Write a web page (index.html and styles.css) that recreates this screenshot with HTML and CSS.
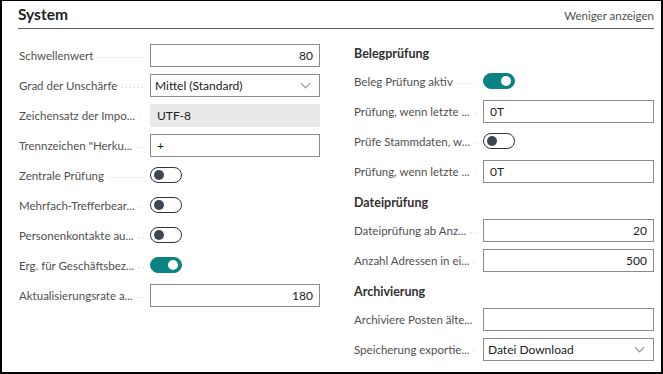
FILE: index.html
```html
<!DOCTYPE html>
<html lang="de">
<head>
  <meta charset="UTF-8">
  <title>System</title>
  <link rel="stylesheet" href="styles.css">
</head>
<body>
  <div class="card">
    <div class="card-head">
      <h2>System</h2>
      <span class="more">Weniger anzeigen</span>
    </div>

    <div class="columns">
      <div class="col">
        <div class="row">
          <label><span>Schwellenwert</span></label>
          <input class="num" type="text" value="80">
        </div>
        <div class="row">
          <label><span>Grad der Unschärfe</span></label>
          <div class="select">Mittel (Standard)<i class="chev"></i></div>
        </div>
        <div class="row">
          <label><span>Zeichensatz der Impo...</span></label>
          <div class="readonly">UTF-8</div>
        </div>
        <div class="row">
          <label><span>Trennzeichen "Herku...</span></label>
          <input type="text" value="+">
        </div>
        <div class="row">
          <label><span>Zentrale Prüfung</span></label>
          <div class="toggle"></div>
        </div>
        <div class="row">
          <label><span>Mehrfach-Trefferbear...</span></label>
          <div class="toggle"></div>
        </div>
        <div class="row">
          <label><span>Personenkontakte au...</span></label>
          <div class="toggle"></div>
        </div>
        <div class="row">
          <label><span>Erg. für Geschäftsbez...</span></label>
          <div class="toggle on"></div>
        </div>
        <div class="row">
          <label><span>Aktualisierungsrate a...</span></label>
          <input class="num" type="text" value="180">
        </div>
      </div>

      <div class="col">
        <h3>Belegprüfung</h3>
        <div class="row">
          <label><span>Beleg Prüfung aktiv</span></label>
          <div class="toggle on"></div>
        </div>
        <div class="row">
          <label><span>Prüfung, wenn letzte ...</span></label>
          <input type="text" value="0T">
        </div>
        <div class="row">
          <label><span>Prüfe Stammdaten, w...</span></label>
          <div class="toggle"></div>
        </div>
        <div class="row">
          <label><span>Prüfung, wenn letzte ...</span></label>
          <input type="text" value="0T">
        </div>

        <h3>Dateiprüfung</h3>
        <div class="row">
          <label><span>Dateiprüfung ab Anz...</span></label>
          <input class="num" type="text" value="20">
        </div>
        <div class="row">
          <label><span>Anzahl Adressen in ei...</span></label>
          <input class="num" type="text" value="500">
        </div>

        <h3>Archivierung</h3>
        <div class="row">
          <label><span>Archiviere Posten älte...</span></label>
          <input type="text" value="">
        </div>
        <div class="row">
          <label><span>Speicherung exportie...</span></label>
          <div class="select">Datei Download<i class="chev"></i></div>
        </div>
      </div>
    </div>
  </div>
</body>
</html>
```

FILE: styles.css
```css
* {
  box-sizing: border-box;
}
body {
  margin: 0;
  font-family: Lato, "Open Sans", sans-serif;
  font-size: 12px;
  color: #505050;
  background: #fff;
}
.card {
  width: 663px;
  height: 374px;
  border: 2px solid #000;
  border-top-width: 1px;
  padding: 0 7px 0 16px;
  background: #fff;
}
.card-head {
  display: flex;
  justify-content: space-between;
  align-items: flex-end;
  height: 28px;
  border-bottom: 1px solid #5c5c5c;
  padding-bottom: 4px;
}
.card-head h2 {
  margin: 0;
  font-size: 15.5px;
  font-weight: 700;
  color: #212121;
  line-height: 20px;
}
.more {
  font-size: 11.5px;
  color: #505050;
  line-height: 16px;
}
.columns {
  display: grid;
  grid-template-columns: 302px 301px;
  column-gap: 33px;
  padding-top: 11px;
}
.col h3 {
  margin: 5px 0 0 1px;
  height: 24px;
  line-height: 24px;
  font-size: 12.5px;
  font-weight: 700;
  color: #303030;
}
.col h3:first-child {
  margin-top: 2px;
}
.row {
  display: grid;
  grid-template-columns: 1fr 170px;
  align-items: center;
  height: 30px;
}
.col + .col .row {
  grid-template-columns: 130px 171px;
}
label {
  display: flex;
  align-items: center;
  padding: 0 6px 0 1px;
  font-size: 11.5px;
  white-space: nowrap;
}
label span {
  flex-shrink: 0;
}
label::after {
  content: "";
  flex: 1;
  height: 1px;
  margin: 4px 0 0 5px;
  background: linear-gradient(to right, #cfcfcf 1px, transparent 1px) repeat-x;
  background-size: 4px 1px;
}
input,
.select,
.readonly {
  height: 23px;
  width: 100%;
  margin: 0;
  border: 1px solid #8a8a8a;
  padding: 0 6px;
  font: inherit;
  color: #212121;
  background: #fff;
  outline: none;
}
input.num {
  text-align: right;
}
.select {
  display: flex;
  align-items: center;
  justify-content: space-between;
  padding: 0 8px 0 4px;
  line-height: 21px;
}
.chev {
  width: 7px;
  height: 7px;
  border-right: 1px solid #8a8a8a;
  border-bottom: 1px solid #8a8a8a;
  transform: rotate(45deg);
  margin: 0 2px 4px 0;
}
.readonly {
  border-color: #e9e9e9;
  background: #e9e9e9;
  display: flex;
  align-items: center;
}
.toggle {
  position: relative;
  width: 32px;
  height: 16px;
  border: 1px solid #333;
  border-radius: 8px;
  background: #fff;
}
.toggle::after {
  content: "";
  position: absolute;
  left: 3px;
  top: 2px;
  width: 10px;
  height: 10px;
  border-radius: 50%;
  background: #3f4653;
}
.toggle.on {
  background: #0a8482;
  border-color: #0a8482;
}
.toggle.on::after {
  left: auto;
  right: 3px;
  background: #fff;
}
```
